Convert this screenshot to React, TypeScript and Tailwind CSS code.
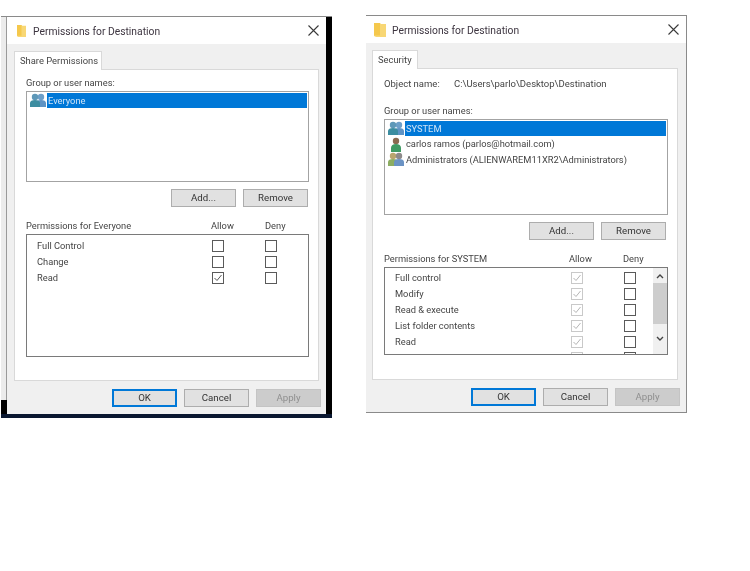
import React from "react";

const FONT = "font-['Roboto','Open_Sans',sans-serif]";

function Folder({ className }: { className: string }) {
  return (
    <svg className={className} viewBox="0 0 12 14" preserveAspectRatio="none">
      <path d="M0 0h6l1 1h5v13H2l-2-1z" fill="#f8d775" />
      <path d="M0 0h6v12.500H0z" fill="#f5c84c" />
    </svg>
  );
}

function CloseX() {
  return (
    <svg width="11" height="11" viewBox="0 0 11 11" stroke="#3a3a3a" strokeWidth="1.1">
      <path d="M.5.5l10 10M10.5.5l-10 10" />
    </svg>
  );
}

function Person({ x, body, head }: { x: number; body: string; head: string }) {
  return (
    <g transform={`translate(${x} 0)`}>
      <circle cx="5" cy="4" r="3.2" fill={head} />
      <path d="M0 14V10c0-2 2-3 5-3s5 1 5 3v4z" fill={body} />
    </g>
  );
}

function TwoBlue() {
  return (
    <svg width="16" height="15" viewBox="0 0 16 15">
      <Person x={6} body="#5f93c4" head="#6d9fc9" />
      <Person x={0} body="#3c8da0" head="#5e98b8" />
    </svg>
  );
}

function GreenUser() {
  return (
    <svg width="12" height="15" viewBox="0 0 11 15">
      <circle cx="5.5" cy="4" r="3.2" fill="#8a6a50" />
      <path d="M.5 15v-4c0-2.500 2-4 5-4s5 1.500 5 4v4z" fill="#3f9a63" />
    </svg>
  );
}

function GreenBlue() {
  return (
    <svg width="16" height="15" viewBox="0 0 16 15">
      <Person x={0} body="#8cad62" head="#b9a56e" />
      <Person x={6} body="#6b93c4" head="#8d8a8a" />
    </svg>
  );
}

function Btn({ label, kind }: { label: string; kind?: "ok" | "off" }) {
  const look =
    kind === "ok"
      ? "border-2 border-[#0078d7] bg-[#e1e1e1] text-[#333]"
      : kind === "off"
        ? "border border-[#c4c4c4] bg-[#cccccc] text-[#8f8f8f]"
        : "border border-[#adadad] bg-[#e1e1e1] text-[#333]";
  return (
    <div className={`flex h-[18px] w-[65px] items-center justify-center text-[9.700px] ${look}`}>{label}</div>
  );
}

function Box({ checked, dim }: { checked?: boolean; dim?: boolean }) {
  return (
    <div className={`h-[12px] w-[12px] shrink-0 border bg-white ${dim ? "border-[#c9c9c9]" : "border-[#5a5a5a]"}`}>
      {checked && (
        <svg viewBox="0 0 10 10" className="h-[10px] w-[10px]" fill="none" stroke={dim ? "#b5b5b5" : "#555"} strokeWidth="1">
          <path d="M1.500 5l2.500 2.500L8.500 2" />
        </svg>
      )}
    </div>
  );
}

function Title({ icon, gap }: { icon: string; gap: string }) {
  return (
    <div className="flex h-[27px] shrink-0 items-center bg-white">
      <Folder className={icon} />
      <span className={`mt-[2px] whitespace-nowrap text-[10.300px] text-[#3d3540] ${gap}`}>Permissions for Destination</span>
      <div className="ml-auto mr-[7px] flex">
        <CloseX />
      </div>
    </div>
  );
}

function Tab({ label, w }: { label: string; w: string }) {
  return (
    <div className={`relative z-10 -mb-px flex h-[19px] items-center whitespace-nowrap border border-b-0 border-[#d9d9d9] bg-white pl-[5px] text-[9.400px] text-[#444] ${w}`}>
      {label}
    </div>
  );
}

function Footer({ pr }: { pr: string }) {
  return (
    <div className={`flex justify-end gap-[7px] pt-[8px] ${pr}`}>
      <Btn label="OK" kind="ok" />
      <Btn label="Cancel" />
      <Btn label="Apply" kind="off" />
    </div>
  );
}

function HeaderRow({ label }: { label: string }) {
  return (
    <div className="flex h-[14px] items-center text-[9.300px] text-[#444]">
      <span className="w-[185px] shrink-0">{label}</span>
      <span className="w-[54px] shrink-0">Allow</span>
      <span>Deny</span>
    </div>
  );
}

function PermRow({ name, allow, dim, nameW, gap }: { name: string; allow?: boolean; dim?: boolean; nameW: string; gap: string }) {
  return (
    <div className="flex h-[16px] shrink-0 items-center pl-[10px] text-[9.300px] text-[#444]">
      <span className={`shrink-0 ${nameW}`}>{name}</span>
      <Box checked={allow} dim={dim} />
      <div className={gap} />
      <Box />
    </div>
  );
}

function LeftDialog() {
  return (
    <div className="flex h-[397px] w-[319px] shrink-0 flex-col bg-[#f0f0f0]">
      <Title icon="ml-[10px] h-[12px] w-[9px]" gap="ml-[7px]" />
      <div className="px-[7px] pt-[7px]">
        <Tab label="Share Permissions" w="w-[88px]" />
        <div className="h-[312px] border border-[#d9d9d9] bg-white pl-[11px] pt-[6px]">
          <div className="h-[14px] text-[9.300px] leading-[14px] text-[#444]">Group or user names:</div>
          <div className="mt-[1px] h-[91px] w-[283px] border border-[#a3a3a3] p-px">
            <div className="flex h-[16px] items-start">
              <div className="flex w-[19px] shrink-0 justify-center pl-[1px]">
                <TwoBlue />
              </div>
              <div className="flex h-[15px] flex-1 items-center bg-[#0078d7] pl-[1px] text-[9.300px] text-[#cfe4f7]">Everyone</div>
            </div>
          </div>
          <div className="mt-[7px] flex w-[282px] justify-end gap-[7px]">
            <Btn label="Add..." />
            <Btn label="Remove" />
          </div>
          <div className="mt-[12px]">
            <HeaderRow label="Permissions for Everyone" />
          </div>
          <div className="mt-[1px] flex h-[123px] w-[283px] flex-col border border-[#7a7a7a] pt-[3px]">
            <PermRow name="Full Control" nameW="w-[175px]" gap="w-[41px]" />
            <PermRow name="Change" nameW="w-[175px]" gap="w-[41px]" />
            <PermRow name="Read" allow nameW="w-[175px]" gap="w-[41px]" />
          </div>
        </div>
      </div>
      <Footer pr="pr-[5px]" />
    </div>
  );
}

function RightDialog() {
  const rows = ["Full control", "Modify", "Read & execute", "List folder contents", "Read", "Write"];
  return (
    <div className="flex h-[398px] w-[321px] shrink-0 flex-col border-r border-b border-t border-[#8a8a8a] bg-[#f0f0f0]">
      <Title icon="ml-[8px] h-[14px] w-[12px]" gap="ml-[6px]" />
      <div className="pl-[6px] pr-[8px] pt-[7px]">
        <Tab label="Security" w="w-[46px]" />
        <div className="h-[312px] border border-[#d9d9d9] bg-white pl-[11px] pt-[8px]">
          <div className="flex h-[14px] items-center text-[9.500px] text-[#444]">
            <span className="w-[70px] shrink-0">Object name:</span>
            <span>C:\Users\parlo\Desktop\Destination</span>
          </div>
          <div className="mt-[13px] h-[14px] text-[9.300px] leading-[14px] text-[#444]">Group or user names:</div>
          <div className="mt-[1px] h-[96px] w-[284px] border border-[#a3a3a3] p-px">
            <div className="flex h-[15px] items-start">
              <div className="flex w-[19px] shrink-0 justify-center pl-[1px]">
                <TwoBlue />
              </div>
              <div className="flex h-[15px] flex-1 items-center bg-[#0078d7] pl-[1px] text-[9.300px] text-[#cfe4f7]">SYSTEM</div>
            </div>
            <div className="flex h-[16px] items-center text-[9.300px] text-[#444]">
              <div className="flex w-[19px] shrink-0 justify-center pl-[1px]">
                <GreenUser />
              </div>
              <span className="pl-[1px]">carlos ramos (parlos@hotmail.com)</span>
            </div>
            <div className="flex h-[15px] items-center text-[9.300px] text-[#444]">
              <div className="flex w-[19px] shrink-0 justify-center pl-[1px]">
                <GreenBlue />
              </div>
              <span className="pl-[1px]">Administrators (ALIENWAREM11XR2\Administrators)</span>
            </div>
          </div>
          <div className="mt-[7px] flex w-[282px] justify-end gap-[7px]">
            <Btn label="Add..." />
            <Btn label="Remove" />
          </div>
          <div className="mt-[12px]">
            <HeaderRow label="Permissions for SYSTEM" />
          </div>
          <div className="mt-[1px] flex h-[88px] w-[284px] overflow-hidden border border-[#7a7a7a]">
            <div className="flex w-[268px] shrink-0 flex-col pt-[2px]">
              {rows.map((r) => (
                <PermRow key={r} name={r === "Write" ? "" : r} allow dim nameW="w-[176px]" gap="w-[41px]" />
              ))}
            </div>
            <div className="flex w-[14px] shrink-0 flex-col bg-[#f0f0f0]">
              <div className="flex h-[15px] items-center justify-center">
                <svg width="8" height="6" viewBox="0 0 8 6" fill="none" stroke="#444" strokeWidth="1.400">
                  <path d="M1 5l3-3 3 3" />
                </svg>
              </div>
              <div className="h-[41px] bg-[#cdcdcd]" />
              <div className="flex flex-1 items-center justify-center">
                <svg width="8" height="6" viewBox="0 0 8 6" fill="none" stroke="#444" strokeWidth="1.400">
                  <path d="M1 1l3 3 3-3" />
                </svg>
              </div>
            </div>
          </div>
        </div>
      </div>
      <Footer pr="pr-[6px]" />
    </div>
  );
}

export default function App() {
  return (
    <div className={`flex h-[571px] w-[750px] items-start bg-white blur-[0.5px] ${FONT}`}>
      <div className="ml-px mt-[16px] flex h-[402px] w-[331px] shrink-0 flex-col border-t border-[#8a8a8a] bg-black">
        <div className="flex h-[397px]">
          <div className="flex w-[6px] shrink-0 flex-col">
            <div className="h-[383px] border-r border-[#9a9a9a] bg-[#ececec]" />
          </div>
          <LeftDialog />
        </div>
        <div className="h-[4px] bg-[#0a1730]" />
      </div>
      <div className="ml-[34px] mt-[15px] shrink-0">
        <RightDialog />
      </div>
    </div>
  );
}
